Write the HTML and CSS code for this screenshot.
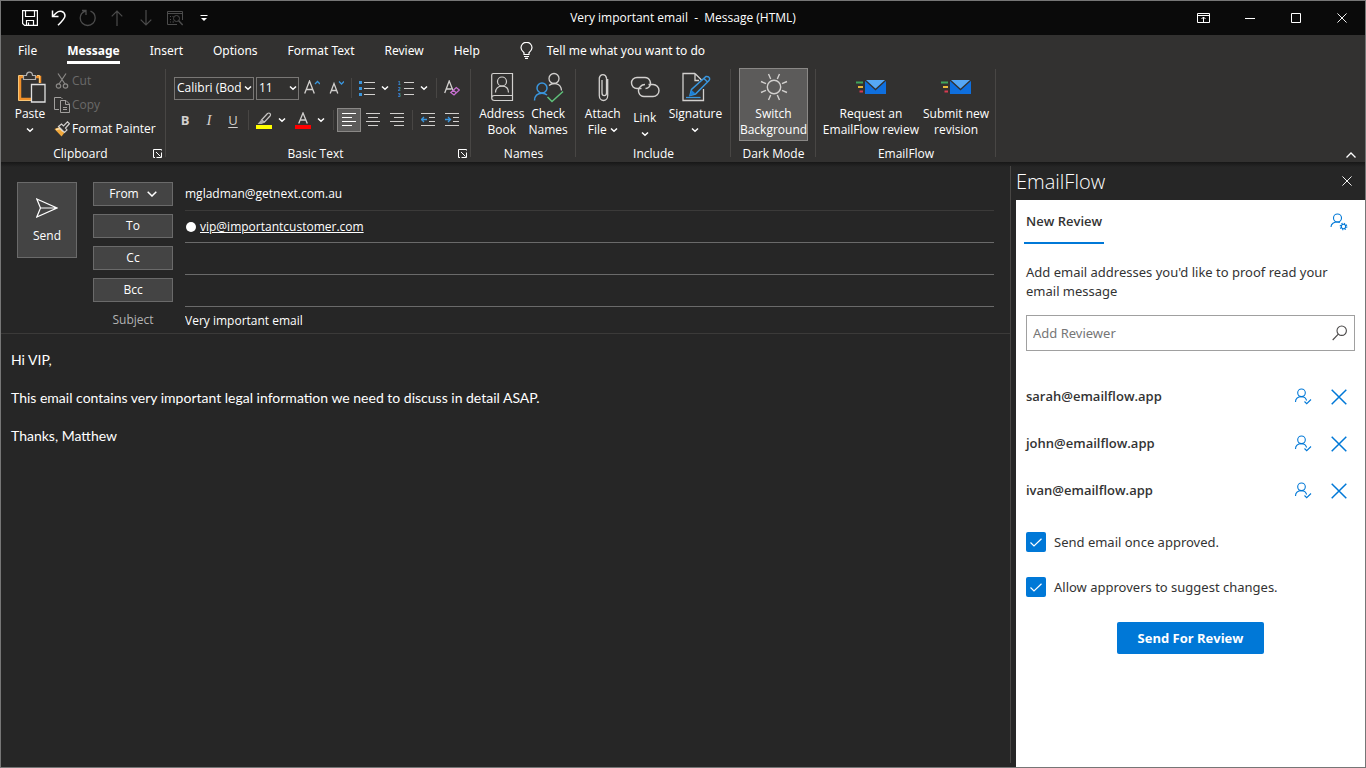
FILE: index.html
```
<!DOCTYPE html>
<html lang="en">

<head>
    <meta charset="UTF-8">
    <meta name="viewport" content="width=device-width, initial-scale=1.0">
    <title>Very important email - Message (HTML)</title>
    <link rel="stylesheet" href="styles.css">
</head>

<body>
    <!-- shared icons -->
    <svg class="sprite" aria-hidden="true">
        <symbol id="chevron" viewBox="0 0 8 8">
            <path d="M1 2.5 L4 5.3 L7 2.5" fill="none" stroke="currentColor" stroke-width="1.5" />
        </symbol>
        <symbol id="launcher" viewBox="0 0 9 9">
            <path d="M8.5 1.5 V0.5 H0.5 V8.5 H2 M3 3 L7.5 7.5 M8.5 3.5 V8.5 H3.5" fill="none" stroke="currentColor" />
        </symbol>
        <symbol id="mail" viewBox="0 0 32 16">
            <path d="M10 1 H31 V15 H10 Z" fill="#0f6fde" />
            <path d="M10 1 H31 L20.5 10.5 Z" fill="#56a8f5" />
            <path d="M10 1 L20.5 10.5 L31 1" fill="none" stroke="#323130" stroke-width="1.3" />
            <path d="M1 3.5 H8" stroke="#3fa45b" stroke-width="2" />
            <path d="M3 8 H8" stroke="#e8b93c" stroke-width="2" />
            <path d="M4.5 12.5 H8" stroke="#d83b50" stroke-width="2" />
        </symbol>
        <symbol id="approver" viewBox="0 0 18 18">
            <g fill="none" stroke="currentColor" stroke-width="1.1">
                <circle cx="7.5" cy="4.8" r="3.8" />
                <path d="M1.5 14 C1.5 10.500 4 8.700 7.500 8.700 C10 8.700 12 10 12.600 12.500" />
                <path d="M10.500 13.500 L12.700 15.700 L17 11.500" />
            </g>
        </symbol>
        <symbol id="cross" viewBox="0 0 16 16">
            <path d="M0.7 0.7 L15.3 15.3 M15.3 0.7 L0.7 15.3" fill="none" stroke="currentColor" stroke-width="1.5" />
        </symbol>
    </svg>

    <div class="window">
        <header class="titlebar">
            <div class="quick-access">
                <button aria-label="Save">
                    <svg width="16" height="16" viewBox="0 0 16 16" fill="none" stroke="currentColor" stroke-width="1.2">
                        <path d="M0.6 0.6 H15.4 V15.4 H2.6 L0.6 13.4 Z M3.5 1 V6.5 H12.5 V1 M4.5 15 V10.5 H11.5 V15 M6.5 12.5 V15" />
                    </svg>
                </button>
                <button aria-label="Undo">
                    <svg width="16" height="16" viewBox="0 0 16 16" fill="none" stroke="currentColor" stroke-width="1.5">
                        <path d="M1.5 0.5 V6.5 H7.5 M1.5 6.5 L5.5 2.7 C8.5 0 14 1 14 6 C14 8 13 9.3 7 15.3" />
                    </svg>
                </button>
                <button aria-label="Redo" disabled>
                    <svg width="18" height="18" viewBox="0 0 18 18" fill="none" stroke="currentColor" stroke-width="1.3">
                        <path d="M3 1.5 H7 V6 M6.7 1.8 C3.5 3 1.2 5.5 1.2 9 A7.5 7.5 0 0 0 16.2 9 C16.2 6 14.5 3.4 11.5 2.2" />
                    </svg>
                </button>
                <button aria-label="Previous item" disabled>
                    <svg width="12" height="16" viewBox="0 0 12 16" fill="none" stroke="currentColor" stroke-width="1.2">
                        <path d="M6 16 V1 M0.7 6.3 L6 1 L11.3 6.3" />
                    </svg>
                </button>
                <button aria-label="Next item" disabled>
                    <svg width="12" height="16" viewBox="0 0 12 16" fill="none" stroke="currentColor" stroke-width="1.2">
                        <path d="M6 0 V15 M0.7 9.7 L6 15 L11.3 9.7" />
                    </svg>
                </button>
                <button aria-label="Print preview" disabled>
                    <svg width="16" height="16" viewBox="0 0 16 16" fill="none" stroke="currentColor">
                        <path d="M10 14.5 H0.5 V1.5 H15.5 V10 M0.5 3.5 H15.5 M3 6.5 H4 M3 9.5 H4 M3 12 H4 M5.5 6.5 H6.5 M5.5 12 H7" />
                        <circle cx="9.5" cy="8.5" r="3" />
                        <path d="M11.7 10.7 L15.7 15" stroke-width="1.5" />
                    </svg>
                </button>
                <button aria-label="Customize toolbar">
                    <svg width="8" height="8" viewBox="0 0 8 8">
                        <path d="M0.5 1.5 H7.5" stroke="currentColor" />
                        <path d="M1 4 H7 L4 7 Z" fill="currentColor" />
                    </svg>
                </button>
            </div>
            <h1 class="title">Very important email&nbsp; - &nbsp;Message (HTML)</h1>
            <div class="window-buttons">
                <button aria-label="Ribbon display options">
                    <svg width="14" height="10" viewBox="0 0 14 10" fill="none" stroke="currentColor">
                        <path d="M0.5 0.5 H12.5 V9.5 H0.5 Z M0.5 2.5 H12.5 M6.5 9 V4 M4.5 6 L6.5 4 L8.5 6" />
                    </svg>
                </button>
                <button aria-label="Minimize">
                    <svg width="10" height="10" viewBox="0 0 10 10"><path d="M0 5.5 H10" stroke="currentColor" /></svg>
                </button>
                <button aria-label="Maximize">
                    <svg width="10" height="10" viewBox="0 0 10 10"><path d="M0.5 0.5 H9.5 V9.5 H0.5 Z" fill="none" stroke="currentColor" /></svg>
                </button>
                <button aria-label="Close">
                    <svg width="10" height="10"><use href="#cross" /></svg>
                </button>
            </div>
        </header>

        <nav class="tabs">
            <a href="#">File</a>
            <a href="#" class="active">Message</a>
            <a href="#">Insert</a>
            <a href="#">Options</a>
            <a href="#">Format Text</a>
            <a href="#">Review</a>
            <a href="#">Help</a>
            <button class="tell-me">
                <svg width="13" height="17" viewBox="0 0 13 17" fill="none" stroke="currentColor" stroke-width="1.2">
                    <path d="M4 12.5 V10.8 C2.5 9.5 1 8 1 5.8 A5.3 5.3 0 0 1 12 5.8 C12 8 10.5 9.5 9 10.8 V12.5 Z M4 14.5 H9 M5 16.4 H8" />
                </svg>
                Tell me what you want to do
            </button>
        </nav>

        <section class="ribbon">
            <section class="group clipboard">
                <div class="group-content">
                    <button class="big paste">
                        <svg width="32" height="32" viewBox="-3 0 32 32" fill="none">
                            <path d="M7 6 H3 V28 H15 M19 6 H23 V12" stroke="#f0902a" stroke-width="2.5" />
                            <path d="M1.5 4.5 H6 M20 4.5 H22.5 V12 M1.5 4.5 V29.5 H14" stroke="#f7c677" />
                            <path d="M6.5 8.5 V4.5 H9.5 C9.5 0 15.5 0 15.5 4.5 H18.5 V8.500 Z" fill="#323130" stroke="#b0b0b0" stroke-width="1.2" />
                            <path d="M14.5 13.5 H28 V31 H14.5 Z" fill="#323130" stroke="#e0e0e0" stroke-width="1.3" />
                        </svg>
                        <span>Paste</span>
                        <svg class="chevron"><use href="#chevron" /></svg>
                    </button>
                    <div class="small-list">
                        <button disabled>
                            <svg width="16" height="16" viewBox="0 0 16 16" fill="none" stroke="#8a8886" stroke-width="1.2">
                                <path d="M4 0.5 L11 11 M12 0.5 L5 11" />
                                <circle cx="4.5" cy="13" r="2.2" />
                                <circle cx="11.5" cy="13" r="2.2" />
                            </svg>
                            Cut
                        </button>
                        <button disabled>
                            <svg width="16" height="16" viewBox="0 0 16 16" fill="none" stroke="#a19f9d">
                                <path d="M5 12.5 H0.5 V0.5 H7 L8.5 2 M6.5 3.5 H12 L15.5 7 V15.5 H6.5 Z M11.5 3.5 V7.5 H15.5 M9 10.5 H13 M9 12.5 H13" />
                            </svg>
                            Copy
                        </button>
                        <button>
                            <svg width="16" height="16" viewBox="0 0 16 16">
                                <path d="M0.5 8 L5.5 6 L11 11 L7.5 15.500 Z" fill="#f0a83c" />
                                <path d="M2 8.500 L6 7.500 L9 10.500" fill="none" stroke="#fbe0ad" stroke-width="1.5" />
                                <path d="M4.500 5.500 L7.5 3 L9.5 5 L13.500 0.8 L15.4 2.700 L11.5 7 L13 9 L10.500 11.500 Z" fill="#323130" stroke="#d2d0ce" stroke-width="1.2" />
                            </svg>
                            Format Painter
                        </button>
                    </div>
                </div>
                <footer class="group-label">
                    <span>Clipboard</span>
                    <button aria-label="Clipboard settings"><svg width="9" height="9"><use href="#launcher" /></svg></button>
                </footer>
            </section>

            <section class="group basic-text">
                <div class="group-content">
                    <div class="tool-row">
                        <div class="combo font-name">
                            <select aria-label="Font"><option>Calibri (Bod</option></select>
                            <svg class="chevron"><use href="#chevron" /></svg>
                        </div>
                        <div class="combo font-size">
                            <select aria-label="Font size"><option>11</option></select>
                            <svg class="chevron"><use href="#chevron" /></svg>
                        </div>
                        <button class="tool" aria-label="Grow font">
                            <svg width="16" height="16" viewBox="0 0 16 16" fill="none" stroke="#d2d0ce" stroke-width="1.3">
                                <path d="M0.7 13.500 L5.5 1 L10.3 13.500 M2.3 9.500 H8.7" />
                                <path d="M11 4 L13.5 1.500 L16 4" stroke="#3a96dd" />
                            </svg>
                        </button>
                        <button class="tool" aria-label="Shrink font">
                            <svg width="16" height="16" viewBox="0 0 16 16" fill="none" stroke="#d2d0ce" stroke-width="1.3">
                                <path d="M2.2 13.500 L6 3.500 L9.8 13.500 M3.5 10.5 H8.5" />
                                <path d="M11 1.500 L13.5 4 L16 1.500" stroke="#3a96dd" />
                            </svg>
                        </button>
                        <i class="sep"></i>
                        <button class="tool" aria-label="Bullets">
                            <svg width="16" height="16" viewBox="0 0 16 16">
                                <path d="M5 2.5 H16 M5 8.5 H16 M5 14.5 H16" stroke="#d2d0ce" />
                                <path d="M0 1 H3 V4 H0 Z M0 7 H3 V10 H0 Z M0 13 H3 V16 H0 Z" fill="#3a96dd" />
                            </svg>
                        </button>
                        <button class="drop" aria-label="Bullet styles"><svg class="chevron"><use href="#chevron" /></svg></button>
                        <button class="tool" aria-label="Numbering">
                            <svg width="16" height="20" viewBox="0 -2 16 20">
                                <path d="M6 2.5 H16 M6 8.5 H16 M6 14.5 H16" stroke="#d2d0ce" />
                                <g class="digits">
                                    <text x="0" y="5">1</text>
                                    <text x="0" y="11">2</text>
                                    <text x="0" y="17">3</text>
                                </g>
                            </svg>
                        </button>
                        <button class="drop" aria-label="Number styles"><svg class="chevron"><use href="#chevron" /></svg></button>
                        <i class="sep"></i>
                        <button class="tool" aria-label="Clear formatting">
                            <svg width="16" height="16" viewBox="0 0 16 16" fill="none" stroke="#d2d0ce" stroke-width="1.3">
                                <path d="M0.7 13 L5.2 1 L9 10.500 M2.3 9 H7.5" />
                                <path d="M6.8 12.5 L12.3 7.5 L15.3 10 L10 15 Z M9.3 10.3 L12.5 13" stroke="#c66fd0" />
                            </svg>
                        </button>
                    </div>
                    <div class="tool-row">
                        <button class="tool letter bold">B</button>
                        <button class="tool letter italic">I</button>
                        <button class="tool letter underline">U</button>
                        <i class="sep"></i>
                        <button class="tool" aria-label="Highlight color">
                            <svg width="16" height="17" viewBox="0 0 16 17">
                                <path d="M0 13 H16 V17 H0 Z" fill="#ffff00" />
                                <path d="M5.5 8 L11.5 1.5 Q13 0.5 14 1.5 Q15 2.8 14 4 L8.5 10 Z" fill="none" stroke="#c8c6c4" stroke-width="1.2" />
                                <path d="M5 8 L9 10.5 L5.5 12 H1.5 Z" fill="#b0aeac" />
                            </svg>
                        </button>
                        <button class="drop" aria-label="Highlight colors"><svg class="chevron"><use href="#chevron" /></svg></button>
                        <button class="tool" aria-label="Font color">
                            <svg width="16" height="17" viewBox="0 0 16 17">
                                <path d="M0 13 H16 V17 H0 Z" fill="#ff0000" />
                                <path d="M3.7 11.5 L8 1 L12.3 11.5 M5.3 8 H10.7" fill="none" stroke="#d2d0ce" stroke-width="1.3" />
                            </svg>
                        </button>
                        <button class="drop" aria-label="Font colors"><svg class="chevron"><use href="#chevron" /></svg></button>
                        <i class="sep"></i>
                        <button class="tool pressed" aria-label="Align left">
                            <svg width="14" height="14" viewBox="0 0 14 14"><path d="M0 0.5 H14 M0 4.5 H10 M0 8.5 H14 M0 12.5 H10" stroke="#fff" /></svg>
                        </button>
                        <button class="tool" aria-label="Center">
                            <svg width="14" height="14" viewBox="0 0 14 14"><path d="M0 0.5 H14 M2 4.5 H12 M0 8.5 H14 M2 12.5 H12" stroke="#d2d0ce" /></svg>
                        </button>
                        <button class="tool" aria-label="Align right">
                            <svg width="14" height="14" viewBox="0 0 14 14"><path d="M0 0.5 H14 M4 4.5 H14 M0 8.5 H14 M4 12.5 H14" stroke="#d2d0ce" /></svg>
                        </button>
                        <i class="sep"></i>
                        <button class="tool" aria-label="Decrease indent">
                            <svg width="14" height="14" viewBox="0 0 14 14" fill="none">
                                <path d="M0 0.5 H14 M8 4.5 H14 M8 8.5 H14 M0 12.5 H14" stroke="#d2d0ce" />
                                <path d="M0.5 6.5 H6 M3 4 L0.5 6.5 L3 9" stroke="#3a96dd" stroke-width="1.3" />
                            </svg>
                        </button>
                        <button class="tool" aria-label="Increase indent">
                            <svg width="14" height="14" viewBox="0 0 14 14" fill="none">
                                <path d="M0 0.5 H14 M8 4.5 H14 M8 8.5 H14 M0 12.5 H14" stroke="#d2d0ce" />
                                <path d="M0 6.5 H5.5 M3 4 L5.5 6.5 L3 9" stroke="#3a96dd" stroke-width="1.3" />
                            </svg>
                        </button>
                    </div>
                </div>
                <footer class="group-label">
                    <span>Basic Text</span>
                    <button aria-label="Font settings"><svg width="9" height="9"><use href="#launcher" /></svg></button>
                </footer>
            </section>

            <section class="group names">
                <div class="group-content">
                    <button class="big">
                        <svg width="32" height="32" viewBox="0 0 32 32" fill="none" stroke="#d2d0ce" stroke-width="1.2">
                            <path d="M6.5 2.5 H26.5 V29.5 H8.5 Q5.7 29.5 5.7 27 V4 Q5.7 2.5 7.5 2.5 M5.7 27 Q5.7 24.5 8.5 24.5 H26.5" />
                            <circle cx="16" cy="10.5" r="4.5" />
                            <path d="M9.5 21.5 C9.5 17.5 12 15.2 16 15.2 S22.5 17.5 22.5 21.5" />
                        </svg>
                        <span>Address<br>Book</span>
                    </button>
                    <button class="big">
                        <svg width="32" height="32" viewBox="0 0 32 32" fill="none" stroke="#d2d0ce" stroke-width="1.3">
                            <circle cx="22" cy="7.500" r="5" />
                            <path d="M17 14.5 C21 11 29 12 29.500 19.500" />
                            <g stroke="#3a96dd" stroke-width="1.5">
                                <circle cx="10" cy="17" r="5" />
                                <path d="M2.500 29.5 C2.500 25 5.5 22.2 10 22.2 C12.5 22.2 14 23 15 24" />
                            </g>
                            <path d="M15.5 26 L20 30.5 L31 20.5" stroke="#5fc07a" stroke-width="1.5" />
                        </svg>
                        <span>Check<br>Names</span>
                    </button>
                </div>
                <footer class="group-label"><span>Names</span></footer>
            </section>

            <section class="group include">
                <div class="group-content">
                    <button class="big">
                        <svg width="32" height="32" viewBox="0 0 32 32" fill="none" stroke="#d2d0ce" stroke-width="1.3">
                            <path d="M20.700 8 V24.5 A4.2 5 0 0 1 12.300 24.5 V7 A3.700 4.3 0 0 1 19.500 7 V22 A2.2 2.5 0 0 1 15 22 V9" />
                        </svg>
                        <span>Attach<br>File <svg class="chevron"><use href="#chevron" /></svg></span>
                    </button>
                    <button class="big link">
                        <svg width="32" height="32" viewBox="0 0 32 32" fill="none" stroke="#d2d0ce" stroke-width="1.4">
                            <path d="M12.5 17.5 H8 A5.5 5.5 0 0 1 8 6.5 H16 A5.7 5.7 0 0 1 20 16 Q18.5 17.5 16.5 17.5" />
                            <path d="M19.5 13.5 H24 A5.5 5.5 0 0 1 24 25.500 H15 A5.7 5.7 0 0 1 11.5 15.5 Q13 13.5 16 13.5" />
                        </svg>
                        <span>Link</span>
                        <svg class="chevron"><use href="#chevron" /></svg>
                    </button>
                    <button class="big">
                        <svg width="32" height="32" viewBox="0 0 32 32" fill="none" stroke="#d2d0ce" stroke-width="1.3">
                            <path d="M16 2.5 H4 V29.5 H24.5 V18 M16 2.5 L23 9.5 M16 2.5 V9.5 H20" />
                            <path d="M11 24.5 L12.5 18.5 L27 5.5 Q29.5 5 30.5 7 Q31 8.5 30 9.5 L16.5 23 Z M25 7.5 L28.5 11" stroke="#3a96dd" stroke-width="1.5" />
                            <path d="M10.5 25 L12.5 19 L16.5 22.5 Z" fill="#1b7fd6" stroke="none" />
                            <path d="M7 26.5 H21.5" stroke="#3a96dd" />
                        </svg>
                        <span>Signature</span>
                        <svg class="chevron"><use href="#chevron" /></svg>
                    </button>
                </div>
                <footer class="group-label"><span>Include</span></footer>
            </section>

            <section class="group dark-mode">
                <div class="group-content">
                    <button class="big pressed">
                        <svg width="32" height="32" viewBox="0 0 32 32" fill="none" stroke="#d2d0ce" stroke-width="1.4">
                            <circle cx="16" cy="16" r="6.7" />
                            <path d="M12.7 8 L10.5 3 M19.3 8 L21.5 3 M24 12.7 L29 10.5 M24 19.3 L29 21.5 M19.3 24 L21.5 29 M12.7 24 L10.5 29 M8 19.3 L3 21.5 M8 12.7 L3 10.5" />
                        </svg>
                        <span>Switch<br>Background</span>
                    </button>
                </div>
                <footer class="group-label"><span>Dark Mode</span></footer>
            </section>

            <section class="group emailflow">
                <div class="group-content">
                    <button class="big">
                        <svg width="32" height="32"><use href="#mail" /></svg>
                        <span>Request an<br>EmailFlow review</span>
                    </button>
                    <button class="big">
                        <svg width="32" height="32"><use href="#mail" /></svg>
                        <span>Submit new<br>revision</span>
                    </button>
                </div>
                <footer class="group-label"><span>EmailFlow</span></footer>
            </section>

            <button class="collapse" aria-label="Collapse ribbon">
                <svg width="10" height="6" viewBox="0 0 10 6"><path d="M0.5 5.5 L5 1 L9.5 5.5" fill="none" stroke="currentColor" stroke-width="1.3" /></svg>
            </button>
        </section>

        <main class="content">
            <section class="compose">
                <form class="mail-header">
                    <button type="button" class="send">
                        <svg width="22" height="20" viewBox="0 0 22 20" fill="none" stroke="currentColor" stroke-width="1.2">
                            <path d="M0.8 1 L21 10 L0.8 19 L4.5 10 Z M4.5 10 H21" />
                        </svg>
                        Send
                    </button>
                    <div class="fields">
                        <button type="button" class="field-button">From
                            <svg width="10" height="6" viewBox="0 0 10 6"><path d="M0.7 0.7 L5 5 L9.3 0.7" fill="none" stroke="currentColor" stroke-width="1.5" /></svg>
                        </button>
                        <div class="field from">mgladman@getnext.com.au</div>
                        <button type="button" class="field-button">To</button>
                        <div class="field to"><span class="presence"></span><a href="#">vip@importantcustomer.com</a></div>
                        <button type="button" class="field-button">Cc</button>
                        <input class="field" type="text" aria-label="Cc">
                        <button type="button" class="field-button">Bcc</button>
                        <input class="field" type="text" aria-label="Bcc">
                        <label class="subject-label" for="subject">Subject</label>
                        <input class="field subject" type="text" id="subject" value="Very important email">
                    </div>
                </form>
                <textarea class="message" aria-label="Message">Hi VIP,

This email contains very important legal information we need to discuss in detail ASAP.

Thanks, Matthew</textarea>
            </section>

            <aside class="pane">
                <header class="pane-header">
                    <h2>EmailFlow</h2>
                    <button aria-label="Close pane"><svg width="10" height="10"><use href="#cross" /></svg></button>
                </header>
                <div class="pane-body">
                    <div class="pane-tabs">
                        <button class="pane-tab">New Review</button>
                        <button class="icon-button" aria-label="Reviewer settings">
                            <svg width="18" height="18" viewBox="0 0 18 18" fill="none" stroke="currentColor" stroke-width="1.1">
                                <circle cx="7.5" cy="5" r="4" />
                                <path d="M1 14 C1 10.5 4 9 7.5 9 C8.5 9 9 9.1 9.8 9.5" />
                                <circle cx="13.5" cy="13.5" r="2.2" />
                                <circle cx="13.5" cy="13.5" r="3.3" stroke-dasharray="1.3 1.29" />
                            </svg>
                        </button>
                    </div>
                    <p class="hint">Add email addresses you'd like to proof read your email message</p>
                    <div class="search">
                        <input type="text" placeholder="Add Reviewer" aria-label="Add Reviewer">
                        <svg width="16" height="16" viewBox="0 0 16 16" fill="none" stroke="#4a4848" stroke-width="1.1">
                            <circle cx="9.7" cy="5.7" r="4.7" />
                            <path d="M6.3 9.2 L0.7 15" />
                        </svg>
                    </div>
                    <ul class="reviewers">
                        <li>
                            <span>sarah@emailflow.app</span>
                            <button class="icon-button" aria-label="Approver"><svg width="18" height="18"><use href="#approver" /></svg></button>
                            <button class="icon-button" aria-label="Remove"><svg width="16" height="16"><use href="#cross" /></svg></button>
                        </li>
                        <li>
                            <span>john@emailflow.app</span>
                            <button class="icon-button" aria-label="Approver"><svg width="18" height="18"><use href="#approver" /></svg></button>
                            <button class="icon-button" aria-label="Remove"><svg width="16" height="16"><use href="#cross" /></svg></button>
                        </li>
                        <li>
                            <span>ivan@emailflow.app</span>
                            <button class="icon-button" aria-label="Approver"><svg width="18" height="18"><use href="#approver" /></svg></button>
                            <button class="icon-button" aria-label="Remove"><svg width="16" height="16"><use href="#cross" /></svg></button>
                        </li>
                    </ul>
                    <label class="check">
                        <input type="checkbox" checked>
                        <svg width="12" height="9" viewBox="0 0 12 9"><path d="M0.5 4.5 L4 8 L11.5 0.7" fill="none" stroke="#fff" stroke-width="1.2" /></svg>
                        <span>Send email once approved.</span>
                    </label>
                    <label class="check">
                        <input type="checkbox" checked>
                        <svg width="12" height="9" viewBox="0 0 12 9"><path d="M0.5 4.5 L4 8 L11.5 0.7" fill="none" stroke="#fff" stroke-width="1.2" /></svg>
                        <span>Allow approvers to suggest changes.</span>
                    </label>
                    <button class="primary">Send For Review</button>
                </div>
            </aside>
        </main>
    </div>
</body>

</html>
```
FILE: styles.css
```
* {
    box-sizing: border-box;
    margin: 0;
    padding: 0;
}

body {
    font-family: "Open Sans", "Noto Sans", sans-serif;
    font-size: 12px;
    line-height: 16px;
    color: #fff;
    background-color: #262626;
}

button,
input,
select,
textarea {
    font: inherit;
    color: inherit;
    background: none;
    border: none;
    outline: none;
}

a {
    color: inherit;
    text-decoration: none;
}

svg {
    flex-shrink: 0;
}

.sprite {
    display: none;
}

.chevron {
    width: 8px;
    height: 8px;
}

.window {
    min-height: 100vh;
    display: flex;
    flex-direction: column;
    border: 1px solid #767676;
}

/* title bar */
.titlebar {
    height: 34px;
    display: grid;
    grid-template-columns: 1fr auto 1fr;
    align-items: center;
    background-color: #0a0a0a;
}

.titlebar button {
    height: 34px;
    display: flex;
    align-items: center;
    justify-content: center;
}

.quick-access {
    display: flex;
    padding-left: 14px;
}

.quick-access button {
    width: 29px;
}

.quick-access button:disabled {
    color: #4c4c4c;
}

.title {
    font-size: 12px;
    font-weight: 400;
}

.window-buttons {
    display: flex;
    justify-content: flex-end;
}

.window-buttons button {
    width: 46px;
}

/* ribbon tabs */
.tabs {
    height: 33px;
    display: flex;
    align-items: flex-start;
    gap: 30px;
    padding: 5px 17px 0;
    font-family: "Noto Sans", "Open Sans", sans-serif;
    font-size: 12px;
    background-color: #323130;
}

.tabs a {
    padding: 3px 0 2px;
    border-bottom: 3px solid transparent;
}

.tabs .active {
    font-weight: 700;
    border-color: #fff;
}

.tell-me {
    display: flex;
    align-items: center;
    gap: 14px;
    padding: 2px 10px;
}

/* ribbon */
.ribbon {
    display: flex;
    height: 94px;
    background-color: #323130;
}

.group {
    position: relative;
    display: flex;
    flex-direction: column;
    justify-content: space-between;
    padding: 0 7px;
}

.group::after {
    content: "";
    position: absolute;
    top: 1px;
    right: 0;
    width: 1px;
    height: 88px;
    background-color: #484644;
}

.group-content {
    display: flex;
    justify-content: center;
}

.group-label {
    display: flex;
    align-items: center;
    text-align: center;
    height: 17px;
}

.group-label span {
    flex: 1;
}

.group-label button {
    width: 9px;
    height: 9px;
    display: flex;
}

.big {
    display: flex;
    flex-direction: column;
    align-items: center;
    height: 73px;
    padding-top: 3px;
    white-space: nowrap;
}

.big span {
    margin-top: 3px;
}

.big > .chevron {
    margin-top: 4px;
}

.pressed {
    background-color: #5c5b5a;
    outline: 1px solid #8a8886;
    outline-offset: -1px;
}

.clipboard {
    width: 165px;
    padding-right: 4px;
}

.clipboard .group-content {
    justify-content: flex-start;
    gap: 2px;
}

.paste {
    width: 44px;
}

.small-list {
    padding-top: 1px;
}

.small-list button {
    display: flex;
    align-items: center;
    gap: 2px;
    height: 24px;
    white-space: nowrap;
}

.small-list button:disabled {
    color: #6b6a69;
}

.basic-text {
    width: 305px;
    padding-right: 4px;
}

.basic-text .group-content {
    flex-direction: column;
    gap: 8px;
    padding-top: 8px;
}

.tool-row {
    display: flex;
    align-items: center;
    height: 24px;
}

.combo {
    display: grid;
    align-items: center;
    margin: 0 1px;
}

.combo select,
.combo .chevron {
    grid-area: 1 / 1;
}

.combo select {
    width: 100%;
    height: 23px;
    padding: 0 2px;
    border: 1px solid #797775;
    border-radius: 0;
    appearance: none;
}

.combo .chevron {
    justify-self: end;
    margin-right: 2px;
    pointer-events: none;
}

.font-name {
    width: 80px;
}

.font-size {
    width: 43px;
}

.tool {
    width: 24px;
    height: 24px;
    display: flex;
    align-items: center;
    justify-content: center;
}

.drop {
    width: 12px;
    height: 24px;
    margin-right: 3px;
    display: flex;
    align-items: center;
    justify-content: center;
}

.sep {
    width: 1px;
    height: 20px;
    margin: 0 3px;
    background-color: #484644;
}

.digits {
    fill: #3a96dd;
    font-family: "Liberation Sans", sans-serif;
    font-size: 5px;
    font-weight: 700;
}

.letter {
    font-size: 13px;
    color: #d2d0ce;
}

.bold {
    font-weight: 700;
}

.italic {
    font-family: "Liberation Serif", serif;
    font-style: italic;
    font-size: 15px;
}

.underline {
    text-decoration: underline;
    text-underline-offset: 2px;
}

.names {
    width: 105px;
}

.names .group-content {
    gap: 4px;
}

.include {
    width: 155px;
}

.include .group-content {
    gap: 8px;
}

.link span {
    margin-top: 7px;
}

.dark-mode {
    width: 85px;
}

.dark-mode .big {
    width: 69px;
}

.emailflow {
    width: 180px;
}

.emailflow .group-content {
    gap: 4px;
}

.collapse {
    margin: auto 9px 4px auto;
    display: flex;
}

/* message */
.content {
    flex: 1;
    display: flex;
    background: linear-gradient(#171717, #262626 5px);
}

.compose {
    flex: 1;
    display: flex;
    flex-direction: column;
    margin: 4px 0;
    border-right: 1px solid #484644;
}

.mail-header {
    display: flex;
    align-items: flex-start;
    gap: 16px;
    padding: 16px 16px 0;
    border-bottom: 1px solid #3b3a39;
}

.send,
.field-button {
    display: flex;
    align-items: center;
    justify-content: center;
    background-color: #444;
    border: 1px solid #6a6a6a;
}

.send {
    flex-direction: column;
    gap: 10px;
    width: 60px;
    height: 76px;
    padding-top: 2px;
}

.fields {
    flex: 1;
    display: grid;
    grid-template-columns: 80px 1fr;
    grid-template-rows: repeat(4, 32px) 23px;
    column-gap: 12px;
}

.field-button {
    gap: 8px;
    height: 24px;
}

.field {
    display: flex;
    align-items: center;
    height: 29px;
    border-bottom: 1px solid #6a6a6a;
}

.from {
    padding-bottom: 4px;
    border-color: #3b3a39;
}

.to {
    padding-bottom: 2px;
}

.field a {
    text-decoration: underline;
}

.presence {
    width: 10px;
    height: 10px;
    margin: 0 4px 0 1px;
    border-radius: 50%;
    background-color: #fff;
}

.subject-label {
    text-align: center;
    padding-top: 2px;
    color: #b3b3b3;
}

.subject {
    height: 20px;
    border: none;
}

.message {
    flex: 1;
    resize: none;
    padding: 16px 10px;
    font-family: Lato, "Open Sans", sans-serif;
    font-size: 14px;
    line-height: 19px;
}

/* EmailFlow pane */
.pane {
    width: 354px;
    padding: 3px 0 0 5px;
    display: flex;
    flex-direction: column;
}

.pane-header {
    height: 35px;
    display: flex;
    align-items: center;
    justify-content: space-between;
    padding: 0 13px 2px 0;
}

.pane-header h2 {
    font-size: 20px;
    line-height: 28px;
    font-weight: 300;
}

.pane-body {
    flex: 1;
    padding: 0 10px;
    font-size: 13px;
    line-height: 19px;
    color: #333;
    background-color: #fff;
}

.pane-tabs {
    display: flex;
    justify-content: space-between;
    align-items: center;
    height: 44px;
    margin-left: -2px;
}

.pane-tab {
    height: 44px;
    padding: 0 2px;
    font-weight: 600;
    border-bottom: 2px solid #0078d7;
}

.icon-button {
    display: flex;
    color: #0078d7;
}

.pane-tabs .icon-button {
    margin-right: 7px;
}

.hint,
.search,
.check {
    font-family: "Noto Sans", "Open Sans", sans-serif;
}

.hint {
    margin-top: 19px;
}

.search {
    display: flex;
    align-items: center;
    height: 36px;
    margin-top: 14px;
    padding: 0 6px;
    border: 1px solid #a0a0a0;
}

.search input {
    flex: 1;
    min-width: 0;
}

.search input::placeholder {
    color: #767676;
}

.reviewers {
    list-style: none;
    margin-top: 22px;
}

.reviewers li {
    display: flex;
    align-items: center;
    height: 47px;
    gap: 19px;
    padding-right: 8px;
    font-weight: 600;
}

.reviewers span {
    flex: 1;
}

.check {
    display: grid;
    grid-template-columns: 20px 1fr;
    align-items: center;
    column-gap: 8px;
    height: 20px;
    margin-top: 18px;
}

.check + .check {
    margin-top: 25px;
}

.check input,
.check svg {
    grid-area: 1 / 1;
}

.check input {
    width: 20px;
    height: 20px;
    border-radius: 2px;
    appearance: none;
}

.check input:checked {
    background-color: #0078d7;
}

.check svg {
    justify-self: center;
    z-index: 1;
    pointer-events: none;
}

.primary {
    display: block;
    min-width: 147px;
    height: 32px;
    margin: 25px auto 0;
    font-weight: 700;
    color: #fff;
    background-color: #0078d7;
    border-radius: 2px;
}
```
